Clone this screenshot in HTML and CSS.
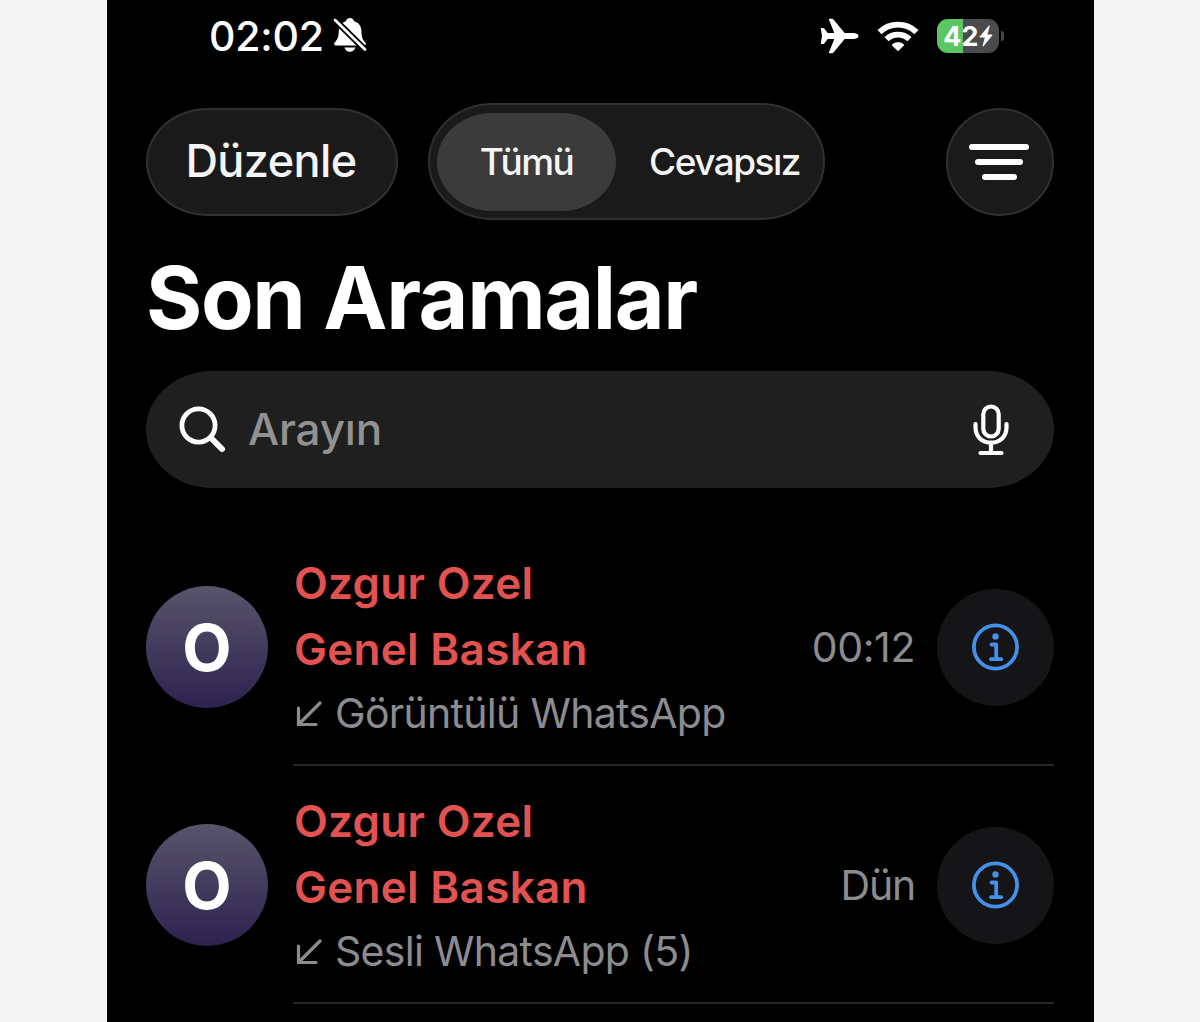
FILE: index.html
```html
<!DOCTYPE html>
<html lang="tr">

<head>
    <meta charset="UTF-8">
    <meta name="viewport" content="width=device-width, initial-scale=1.0">
    <title>Son Aramalar</title>
    <link rel="stylesheet" href="styles.css">
</head>

<body>
    <main class="phone">
        <header class="status">
            <span class="clock">02:02</span>
            <svg class="bell" width="36" height="38" viewBox="0 0 36 38">
                <path fill="#fff" d="M18 1c2.300 0 3.800 1.300 4.200 3.200 5 1.500 7 5.300 7.200 9.800.2 6 1 8.500 4 11.500.8 1 .6 3-1.400 3H4c-2 0-2.200-2-1.400-3 3-3 4-5.500 4.200-11.500.2-4.500 2.200-8.300 7-9.800C14.200 2.300 15.700 1 18 1z"/>
                <path fill="#fff" d="M12.500 30.500h10.800c-.5 2.600-2.600 4.300-5.400 4.300s-4.900-1.700-5.400-4.300z"/>
                <path stroke="#000" stroke-width="6.400" d="M0 0L36 35.400"/>
                <path stroke="#fff" stroke-width="2.800" stroke-linecap="round" d="M3 3L33 32.500"/>
            </svg>
            <svg class="plane" width="39" height="36" viewBox="0 0 39 36">
                <path fill="#fff" d="M38.500 18c0 1.800-2.500 3.100-5.500 3.100h-8.300L13.500 34.600c-.4.500-.9.700-1.500.7H9.800c-.7 0-1-.5-.7-1.200l5.200-13H7.800l-3.600 4.300c-.3.400-.7.600-1.200.6H1.600c-.6 0-.8-.4-.7-1L2 18 .9 11c-.1-.6.1-1 .7-1H3c.5 0 .9.200 1.200.6l3.600 4.300h6.500l-5.200-13C8.800 1.200 9.100.7 9.800.7H12c.6 0 1.100.2 1.500.7l11.200 13.500H33c3 0 5.500 1.300 5.500 3.100z"/>
            </svg>
            <svg class="wifi" width="42" height="32" viewBox="0 0 42 32">
                <g fill="none" stroke="#fff" stroke-width="5.800">
                    <path d="M2.500 12.200a26.500 26.500 0 0 1 37 0"/>
                    <path d="M9.500 19.200a16.500 16.500 0 0 1 23 0"/>
                </g>
                <path fill="#fff" d="M21 31.300l-5.700-5.600c-.5-.5-.4-1.100.1-1.500 3.300-2.600 7.900-2.600 11.200 0 .5.400.6 1 .1 1.500z"/>
            </svg>
            <div class="battery">
                <span>42</span>
                <svg width="14" height="22" viewBox="0 0 14 22">
                    <path fill="#fff" d="M9.800.8L.8 11.600c-.4.500-.2 1 .4 1h4.600L3.600 20.800c-.2.800.4 1 .9.400l8.700-10.800c.4-.5.200-1-.4-1H8.400L10.700 1.200c.2-.8-.4-1-.9-.4z"/>
                </svg>
            </div>
            <i class="battery-tip"></i>
        </header>

        <nav class="toolbar">
            <button class="glass edit">Düzenle</button>
            <div class="glass tabs">
                <button class="tab active">Tümü</button>
                <button class="tab missed">Cevapsız</button>
            </div>
            <button class="glass filter">
                <i class="bar"></i>
                <i class="bar medium"></i>
                <i class="bar small"></i>
            </button>
        </nav>

        <h1>Son Aramalar</h1>

        <div class="search">
            <svg class="lens" width="48" height="48" viewBox="0 0 48 48" fill="none" stroke="#fff" stroke-linecap="round">
                <circle cx="19.500" cy="19.500" r="16.600" stroke-width="4.800"/>
                <path stroke-width="6" d="M32.500 32.500l10.500 10.500"/>
            </svg>
            <span class="hint">Arayın</span>
            <svg class="mic" width="36" height="52" viewBox="0 0 36 52" fill="none" stroke="#fff" stroke-width="4.200" stroke-linecap="round">
                <rect x="10.300" y="2.500" width="15.400" height="30" rx="7.700"/>
                <path d="M2.500 20v3.500c0 9 6.500 15.200 15.500 15.200s15.500-6.200 15.500-15.200V20M18 39v9.500M7.500 49h21"/>
            </svg>
        </div>

        <ul class="calls">
            <li class="call">
                <div class="avatar">O</div>
                <div class="details">
                    <div class="name">Ozgur Ozel</div>
                    <div class="name">Genel Baskan</div>
                    <div class="type">
                        <svg width="28" height="28" viewBox="0 0 28 28" fill="none" stroke="#8c8c90" stroke-width="3.200" stroke-linecap="round"><path d="M26 4L5 25M4.500 9v16.500H22"/></svg>
                        <span>Görüntülü WhatsApp</span>
                    </div>
                </div>
                <span class="time">00:12</span>
                <div class="info">
                    <svg width="48" height="48" viewBox="0 0 48 48" fill="none" stroke="#4590ea" stroke-width="3.800">
                        <circle cx="23.500" cy="24" r="21.600"/>
                        <circle cx="23.500" cy="13.500" r="3.200" fill="#4590ea" stroke="none"/>
                        <path stroke-width="3.800" stroke-linecap="round" stroke-linejoin="round" d="M19.500 21.500h4.700v14.700M19 36.200h10.300"/>
                    </svg>
                </div>
            </li>
            <li class="call">
                <div class="avatar">O</div>
                <div class="details">
                    <div class="name">Ozgur Ozel</div>
                    <div class="name">Genel Baskan</div>
                    <div class="type">
                        <svg width="28" height="28" viewBox="0 0 28 28" fill="none" stroke="#8c8c90" stroke-width="3.200" stroke-linecap="round"><path d="M26 4L5 25M4.500 9v16.500H22"/></svg>
                        <span>Sesli WhatsApp (5)</span>
                    </div>
                </div>
                <span class="time day">Dün</span>
                <div class="info">
                    <svg width="48" height="48" viewBox="0 0 48 48" fill="none" stroke="#4590ea" stroke-width="3.800">
                        <circle cx="23.500" cy="24" r="21.600"/>
                        <circle cx="23.500" cy="13.500" r="3.200" fill="#4590ea" stroke="none"/>
                        <path stroke-width="3.800" stroke-linecap="round" stroke-linejoin="round" d="M19.500 21.500h4.700v14.700M19 36.200h10.300"/>
                    </svg>
                </div>
            </li>
        </ul>
    </main>
</body>

</html>
```

FILE: styles.css
```css
* {
    box-sizing: border-box;
}

body {
    margin: 0;
    background: #f4f4f4;
    font-family: Inter, "Liberation Sans", sans-serif;
    color: #fff;
}

button {
    font-family: inherit;
    color: #f5f5f5;
    border: none;
    padding: 0;
    background: none;
}

.phone {
    width: 987px;
    height: 1022px;
    margin-left: 106.500px;
    padding: 0 39.500px;
    background: #000;
    overflow: hidden;
    white-space: nowrap;
}

/* Status bar */
.status {
    display: flex;
    align-items: center;
    height: 72px;
    padding-left: 63px;
}

.clock {
    width: 116px;
    font-size: 41px;
    font-weight: 500;
    letter-spacing: -0.2px;
}

.bell {
    margin-left: 7px;
}

.plane {
    margin-left: 452px;
}

.wifi {
    margin-left: 18px;
}

.battery {
    display: flex;
    align-items: center;
    justify-content: center;
    width: 62px;
    height: 34px;
    margin-left: 18px;
    border-radius: 11px;
    background: linear-gradient(90deg, #5cc665 42%, #4b4b4d 42%);
    font-size: 27px;
    font-weight: 700;
}

.battery-tip {
    width: 3px;
    height: 10px;
    margin-left: 2px;
    border-radius: 0 3px 3px 0;
    background: #48484a;
}

/* Top buttons */
.toolbar {
    display: flex;
    align-items: center;
    height: 118px;
    margin-top: 31px;
}

.glass {
    background: #1a1a1a;
    border: 2px solid #303030;
}

.edit {
    width: 252px;
    height: 108px;
    padding: 0 2px 4px 0;
    border-radius: 62px / 54px;
    font-size: 45px;
    font-weight: 500;
    letter-spacing: -0.6px;
}

.tabs {
    display: flex;
    align-items: center;
    width: 397px;
    height: 117px;
    margin: 0 0 1px 30px;
    padding-left: 7px;
    border-radius: 64px / 58px;
}

.tab {
    font-size: 37px;
    font-weight: 500;
    letter-spacing: -1.500px;
}

.active {
    width: 179px;
    height: 98px;
    border-radius: 55px / 49px;
    background: #3b3b3b;
}

.missed {
    margin-left: 33px;
}

.filter {
    display: flex;
    flex-direction: column;
    align-items: center;
    justify-content: center;
    gap: 9px;
    width: 108px;
    height: 108px;
    margin-left: auto;
    padding-right: 2px;
    border-radius: 50%;
}

.bar {
    width: 60px;
    height: 6px;
    border-radius: 3px;
    background: #fff;
}

.medium {
    width: 48px;
}

.small {
    width: 35px;
}

h1 {
    margin: 25px 0 0;
    height: 106px;
    font-size: 86px;
    line-height: 104px;
    font-weight: 700;
    letter-spacing: -1.400px;
}

/* Search field */
.search {
    display: flex;
    align-items: center;
    height: 117px;
    margin-top: 19px;
    padding: 0 45px 0 33px;
    border-radius: 66px / 58.500px;
    background: #1f1f1f;
}

.hint {
    margin-left: 21px;
    padding-bottom: 1px;
    font-size: 44px;
    font-weight: 500;
    letter-spacing: -0.2px;
    color: #929292;
}

.mic {
    margin-left: auto;
}

/* Call list */
.calls {
    list-style: none;
    margin: 40px 0 0;
    padding: 0;
}

.call {
    display: flex;
    align-items: center;
    height: 238px;
    background: linear-gradient(#262626, #262626) 147px 100% / 761px 2px no-repeat;
}

.avatar {
    display: flex;
    align-items: center;
    justify-content: center;
    width: 122px;
    height: 122px;
    border-radius: 50%;
    background: linear-gradient(#58546a, #2d2250);
    font-size: 64px;
    font-weight: 700;
}

.details {
    margin-left: 26px;
}

.name {
    height: 66px;
    line-height: 66px;
    font-size: 44px;
    font-weight: 600;
    letter-spacing: 0.3px;
    color: #e25250;
}

.type {
    display: flex;
    align-items: center;
    gap: 13px;
    height: 62px;
    font-size: 41px;
    letter-spacing: -0.7px;
    color: #8c8c90;
}

.time {
    margin-left: auto;
    font-size: 41px;
    letter-spacing: -0.4px;
    color: #8c8c90;
}

.day {
    letter-spacing: -1.200px;
}

.info {
    display: flex;
    align-items: center;
    justify-content: center;
    width: 117px;
    height: 117px;
    margin-left: 22px;
    border-radius: 50%;
    background: #151517;
}
```
